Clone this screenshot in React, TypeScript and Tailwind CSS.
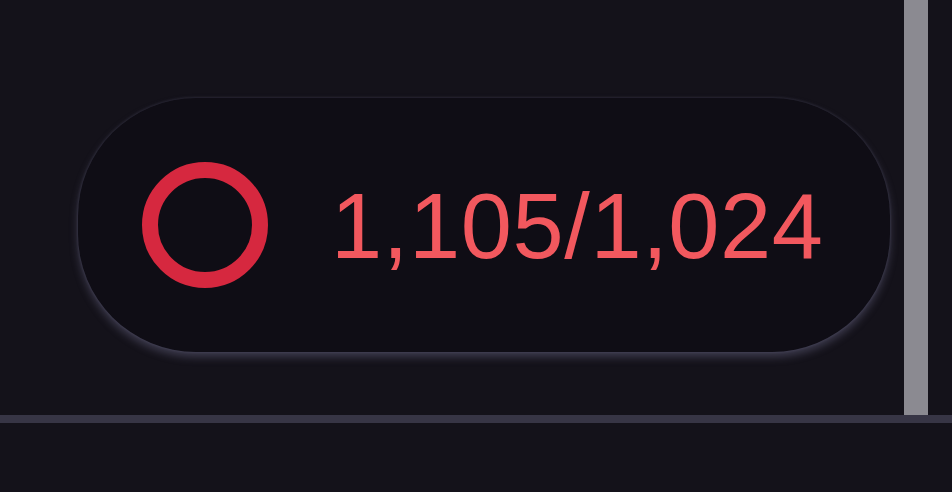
export default function App() {
  return (
    <div className="flex h-[492px] w-[952px] flex-col overflow-hidden bg-[#14121a] font-['Liberation_Sans',Arial,sans-serif]">
      <div className="flex h-[415px] shrink-0">
        <div className="w-[904px] shrink-0 pl-[78px] pt-[98px]">
          <div className="flex h-[254px] w-[812px] items-center rounded-[118px] bg-[#0f0d15] pl-[64px] shadow-[0_5px_8px_rgba(110,108,140,0.45),0_0_3px_rgba(110,108,140,0.35)]">
            <div className="h-[126px] w-[126px] shrink-0 rounded-full border-[16px] border-[#d6283f]" />
            <span className="ml-[63px] mt-[2px] text-[92px] leading-none tracking-[0.6px] text-[#f2585e]">
              1,105/1,024
            </span>
          </div>
        </div>
        <div className="w-[24px] shrink-0 bg-[#8b8a91]" />
        <div className="flex-1" />
      </div>
      <div className="h-[8px] shrink-0 bg-[#373545]" />
      <div className="flex-1 bg-[#14121a]" />
    </div>
  );
}
